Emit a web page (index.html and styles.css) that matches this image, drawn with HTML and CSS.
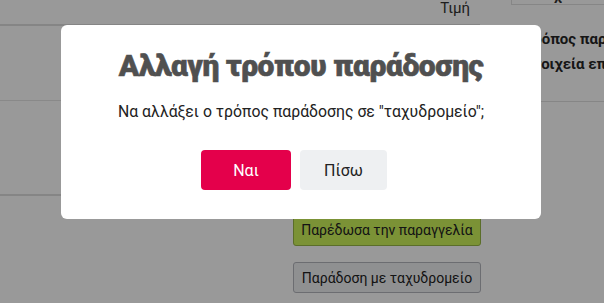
FILE: index.html
```html
<!DOCTYPE html>
<html lang="el">
<head>
<meta charset="utf-8">
<title>Αλλαγή τρόπου παράδοσης</title>
<link rel="stylesheet" href="styles.css">
</head>
<body>
<div class="page">
  <div class="left">
    <div class="thead"><span class="th-price">Τιμή</span></div>
    <div class="row row1"></div>
    <div class="row row2"></div>
    <div class="actions">
      <button class="act act-green">Παρέδωσα την παραγγελία</button>
      <button class="act act-gray">Παράδοση με ταχυδρομείο</button>
    </div>
  </div>
  <div class="right">
    <div class="rhead"><span class="rhead-text">Στοιχεία αποστολής</span></div>
    <div class="rbody">
      <div class="rline">Τρόπος παράδοσης</div>
      <div class="rline">Στοιχεία επικοινωνίας</div>
    </div>
  </div>
</div>

<div class="overlay">
  <div class="modal">
    <h2 class="modal-title">Αλλαγή τρόπου παράδοσης</h2>
    <p class="modal-text">Να αλλάξει ο τρόπος παράδοσης σε "ταχυδρομείο";</p>
    <div class="modal-actions">
      <button class="mbtn mbtn-yes">Ναι</button>
      <button class="mbtn mbtn-back">Πίσω</button>
    </div>
  </div>
</div>
</body>
</html>
```
FILE: styles.css
```css
* { box-sizing: border-box; }
html, body { margin: 0; padding: 0; }
body {
  width: 604px;
  height: 303px;
  overflow: hidden;
  background: #ffffff;
  font-family: Roboto, "Noto Sans", sans-serif;
  color: #333;
}

.page {
  display: flex;
  gap: 31px;
}

.left {
  width: 480px;
  flex: none;
}

.thead {
  height: 26px;
  border-bottom: 2px solid #dedede;
  display: flex;
  justify-content: flex-end;
  padding-right: 10px;
}
.th-price {
  font-size: 15px;
  line-height: 18px;
  margin-top: -1px;
  color: #333;
}

.row { border-bottom: 1px solid #e4e4e4; }
.row1 { height: 75px; }
.row2 { height: 95px; border-bottom: 2px solid #dedede; }

.actions {
  display: flex;
  flex-direction: column;
  align-items: flex-end;
  gap: 16px;
  padding-top: 18px;
}
.act {
  width: 188px;
  height: 32px;
  font-family: Roboto, sans-serif;
  font-size: 14px;
  color: #222;
  border-radius: 3px;
  margin-right: -1px;
}
.act-green {
  background: #cdf35a;
  border: 1px solid #98b745;
}
.act-gray {
  height: 31px;
  background: #eff0f2;
  border: 1px solid #b4b6bd;
}

.right {
  flex: 1;
  min-width: 0;
  overflow: hidden;
}
.rhead {
  height: 19px;
  border-left: 1px solid #e0e0e0;
  border-bottom: 1px solid #e0e0e0;
  padding-left: 12px;
}
.rhead-text {
  display: block;
  font-size: 15px;
  font-weight: 700;
  line-height: 18px;
  margin-top: -14px;
  white-space: nowrap;
}
.rbody {
  height: 97px;
  border-bottom: 1px solid #e0e0e0;
  padding-left: 14px;
  padding-top: 22px;
}
.rline {
  font-size: 15px;
  font-weight: 700;
  line-height: 25px;
  white-space: nowrap;
  color: #262626;
}

.overlay {
  position: fixed;
  inset: 0;
  background: rgba(0, 0, 0, 0.4);
  display: flex;
  justify-content: center;
  align-items: flex-start;
  padding-top: 25px;
}
.modal {
  width: 480px;
  background: #fff;
  border-radius: 6px;
  padding: 23px 0 29px;
  text-align: center;
  margin-left: -2px;
}
.modal-title {
  margin: 0;
  font-family: Roboto, sans-serif;
  font-weight: 900;
  font-size: 30px;
  line-height: 36px;
  letter-spacing: -0.4px;
  color: #505050;
  -webkit-text-stroke: 0.6px #505050;
}
.modal-text {
  margin: 18px 0 0;
  font-size: 15.8px;
  line-height: 20px;
  color: #222;
}
.modal-actions {
  margin-top: 28px;
  display: flex;
  justify-content: center;
  gap: 9px;
  padding-right: 14px;
}
.mbtn {
  height: 40px;
  border: none;
  border-radius: 4px;
  font-family: Roboto, sans-serif;
  font-size: 16px;
}
.mbtn-yes {
  width: 90px;
  background: #e4004b;
  color: #fff;
}
.mbtn-back {
  width: 87px;
  background: #eef0f2;
  color: #222;
}
```
